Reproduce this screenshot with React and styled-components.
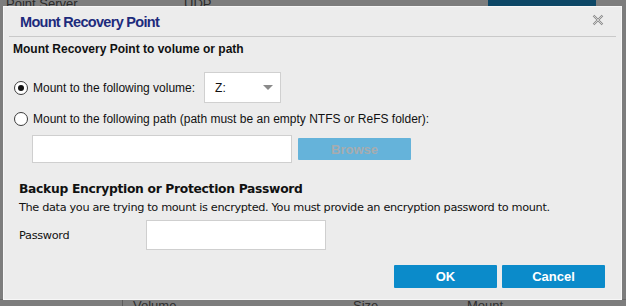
import React, { useState } from "react";
import styled, { createGlobalStyle } from "styled-components";

const GlobalStyle = createGlobalStyle`
  html, body {
    margin: 0;
    padding: 0;
    background: #7d7d7d;
    overflow: hidden;
  }
  body {
    font-family: "Liberation Sans", Arial, sans-serif;
  }
`;

const Page = styled.div`
  position: relative;
  width: 626px;
  height: 306px;
  overflow: hidden;
  background: #7d7d7d;
  display: flex;
  flex-direction: column;
  justify-content: space-between;
`;

const TopStrip = styled.div`
  display: flex;
  align-items: flex-end;
  height: 8px;
  font-size: 13px;
  color: #1c1c1c;
  line-height: 8px;
  overflow: hidden;
`;

const BackText = styled.span`
  width: ${(p) => p.w}px;
  padding-left: ${(p) => p.pl || 0}px;
  white-space: nowrap;
  color: #2a2a2a;
`;

const ChangeBtn = styled.div`
  width: 108px;
  height: 8px;
  background: #0d4766;
  margin-left: auto;
  margin-right: 30px;
`;

const BottomStrip = styled.div`
  display: flex;
  height: 6px;
  font-size: 13px;
  line-height: 12px;
  overflow: hidden;
  border-top: 1px solid #6a6a6a;
`;

const BackCol = styled.div`
  width: ${(p) => p.w}px;
  padding-left: ${(p) => p.pl || 0}px;
  color: #2e2e2e;
  border-left: ${(p) => (p.line ? "1px solid #5d5d5d" : "none")};
`;

const Modal = styled.div`
  position: absolute;
  left: 3px;
  top: 6px;
  width: 617px;
  height: 292px;
  background: #ececec;
  border: 1px solid #f7f7f7;
  display: flex;
  flex-direction: column;
`;

const Header = styled.div`
  display: flex;
  align-items: center;
  justify-content: space-between;
  height: 29px;
  margin: 0 5px;
  padding: 0 12px 0 11px;
  border-bottom: 1px solid #c9c9c9;
`;

const Title = styled.h1`
  margin: 0;
  font-size: 14.5px;
  letter-spacing: -0.7px;
  font-weight: bold;
  color: #1d2b7c;
  font-family: "Liberation Sans", Arial, sans-serif;
`;

const Close = styled.button`
  border: 0;
  background: none;
  padding: 0;
  width: 12px;
  height: 12px;
  display: flex;
  cursor: pointer;
  margin-top: -3px;
`;

const Body = styled.div`
  padding: 5px 9px 0 9px;
  display: flex;
  flex-direction: column;
`;

const Section = styled.div`
  font-size: 12px;
  font-weight: bold;
  color: #111;
  line-height: 14px;
`;

const OptionRow = styled.label`
  display: flex;
  align-items: center;
  gap: 5px;
  font-size: 12px;
  color: #111;
  height: ${(p) => p.h}px;
  margin-top: ${(p) => p.mt}px;
  cursor: pointer;
`;

const Radio = styled.span`
  width: 12px;
  height: 12px;
  border-radius: 50%;
  border: 1px solid #3c3c3c;
  background: #fff;
  display: flex;
  align-items: center;
  justify-content: center;
  flex-shrink: 0;
  margin-left: 1px;

  &::after {
    content: "";
    width: 6px;
    height: 6px;
    border-radius: 50%;
    background: ${(p) => (p.checked ? "#111" : "transparent")};
  }
`;

const Select = styled.div`
  margin-left: 4px;
  background: #fff;
  border: 1px solid #d0d0d0;
  display: flex;
  align-items: center;
  justify-content: space-between;
  padding: 0 6px 0 10px;
  box-sizing: border-box;
  width: 77px;
  height: 31px;
  font-size: 12px;
  color: #111;
`;

const Caret = styled.span`
  width: 0;
  height: 0;
  border-left: 5px solid transparent;
  border-right: 5px solid transparent;
  border-top: 5px solid #8a8a8a;
  margin-right: 1px;
`;

const PathRow = styled.div`
  display: flex;
  align-items: center;
  gap: 6px;
  margin-top: 9px;
  padding-left: 19px;
`;

const TextInput = styled.input`
  box-sizing: border-box;
  width: ${(p) => p.w}px;
  height: ${(p) => p.h}px;
  background: #fff;
  border: 1px solid #cfcfcf;
  outline: none;
  font-size: 12px;
  padding: 0 6px;
  margin: 0;
`;

const Button = styled.button`
  box-sizing: border-box;
  width: ${(p) => p.w}px;
  height: ${(p) => p.h}px;
  border: 0;
  border-radius: 1px;
  background: ${(p) => (p.disabled ? "#65b3da" : "#0b8bca")};
  color: ${(p) => (p.disabled ? "#a7acaf" : "#fff")};
  font-family: "Liberation Sans", Arial, sans-serif;
  font-size: 13px;
  font-weight: bold;
  padding: 0;
  cursor: ${(p) => (p.disabled ? "default" : "pointer")};
`;

const Protect = styled.div`
  font-family: "DejaVu Sans", Tahoma, sans-serif;
  padding-left: 6px;
  margin-top: 18px;
  color: #111;
`;

const Heading = styled.div`
  font-size: 12.3px;
  font-weight: bold;
  line-height: 16px;
  letter-spacing: -0.3px;
`;

const Desc = styled.div`
  font-size: 11.3px;
  line-height: 14px;
  margin-top: 4px;
  letter-spacing: -0.35px;
`;

const PwRow = styled.div`
  display: flex;
  align-items: center;
  margin-top: 5px;
  font-size: 11.3px;
  letter-spacing: -0.3px;
`;

const PwLabel = styled.span`
  width: 127px;
`;

const Footer = styled.div`
  display: flex;
  justify-content: flex-end;
  gap: 5px;
  margin-top: 15px;
  padding-right: 7px;
`;

const CloseIcon = () => (
  <svg width="12" height="12" viewBox="0 0 12 12">
    <path d="M1.5 1.5 L10.5 10.5 M10.5 1.5 L1.5 10.5" stroke="#8a8a8a" strokeWidth="2.2" />
    <path d="M1.5 1.5 L10.5 10.5 M10.5 1.5 L1.5 10.5" stroke="#ececec" strokeWidth="0.7" />
  </svg>
);

export default function App() {
  const [mode, setMode] = useState("volume");
  return (
    <>
      <GlobalStyle />
      <Page>
        <TopStrip>
          <BackText w={178} pl={6}>Point Server.</BackText>
          <BackText w={100}>UDP</BackText>
          <ChangeBtn />
        </TopStrip>
        <BottomStrip>
          <BackCol w={122} />
          <BackCol w={220} pl={10} line>Volume</BackCol>
          <BackCol w={114}>Size</BackCol>
          <BackCol w={100}>Mount</BackCol>
        </BottomStrip>

        <Modal>
          <Header>
            <Title>Mount Recovery Point</Title>
            <Close aria-label="Close">
              <CloseIcon />
            </Close>
          </Header>
          <Body>
            <Section>Mount Recovery Point to volume or path</Section>
            <OptionRow h={31} mt={16} onClick={() => setMode("volume")}>
              <Radio checked={mode === "volume"} />
              Mount to the following volume:
              <Select>
                Z:
                <Caret />
              </Select>
            </OptionRow>
            <OptionRow h={14} mt={9} onClick={() => setMode("path")}>
              <Radio checked={mode === "path"} />
              Mount to the following path (path must be an empty NTFS or ReFS folder):
            </OptionRow>
            <PathRow>
              <TextInput w={260} h={28} />
              <Button w={113} h={22} disabled>
                Browse
              </Button>
            </PathRow>
            <Protect>
              <Heading>Backup Encryption or Protection Password</Heading>
              <Desc>
                The data you are trying to mount is encrypted. You must provide an encryption password to mount.
              </Desc>
              <PwRow>
                <PwLabel>Password</PwLabel>
                <TextInput w={180} h={30} type="password" />
              </PwRow>
            </Protect>
            <Footer>
              <Button w={103} h={23}>OK</Button>
              <Button w={103} h={23}>Cancel</Button>
            </Footer>
          </Body>
        </Modal>
      </Page>
    </>
  );
}
